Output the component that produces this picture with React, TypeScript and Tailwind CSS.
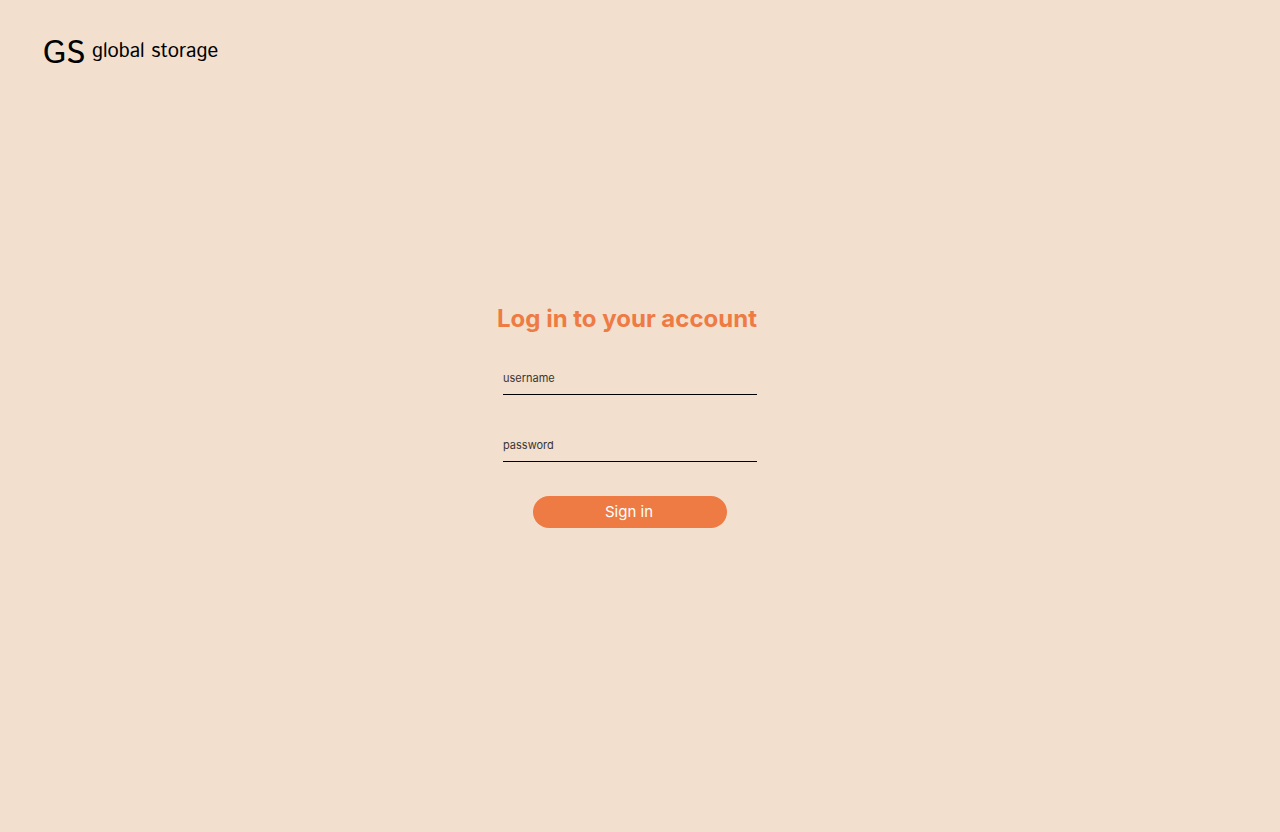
import React, { useState } from "react";

type FieldProps = {
  id: string;
  label: string;
  type: string;
  value: string;
  onChange: (value: string) => void;
};

function Field({ id, label, type, value, onChange }: FieldProps) {
  return (
    <div className="grid">
      <input
        id={id}
        name={id}
        type={type}
        placeholder=" "
        value={value}
        onChange={(event) => onChange(event.target.value)}
        className="peer col-start-1 row-start-1 h-[33px] w-full border-b border-black bg-transparent text-[11px] text-[#333] outline-none"
      />
      <label
        htmlFor={id}
        className="col-start-1 row-start-1 h-8 cursor-text text-[11px] leading-8 text-[#3a3532] opacity-0 peer-placeholder-shown:opacity-100"
      >
        {label}
      </label>
    </div>
  );
}

export default function App() {
  const [username, setUsername] = useState("");
  const [password, setPassword] = useState("");

  return (
    <div className="flex min-h-screen flex-col bg-[#f2dfce] font-['Inter',sans-serif]">
      <header className="flex px-[43px] pt-8 pb-7">
        <a href="#" className="flex items-start gap-[7px] font-['Istok_Web','Noto_Sans',sans-serif] text-black">
          <span className="text-[32px] leading-[44px]">GS</span>
          <span className="text-xl leading-10">global storage</span>
        </a>
      </header>
      <main className="flex flex-1 flex-col items-center pt-[199px] pr-[26px]">
        <form className="w-[260px]" onSubmit={(event) => event.preventDefault()}>
          <h1 className="text-2xl leading-8 font-bold whitespace-nowrap text-[#ed7b43]">
            Log in to your account
          </h1>
          <div className="flex flex-col gap-[34px] pt-[27px] pl-1.5">
            <Field id="username" label="username" type="text" value={username} onChange={setUsername} />
            <Field id="password" label="password" type="password" value={password} onChange={setPassword} />
            <button type="submit" className="mx-auto h-8 w-[194px] rounded-full bg-[#ed7b43] pr-0.5 text-[15px] text-white">
              Sign in
            </button>
          </div>
        </form>
      </main>
    </div>
  );
}
